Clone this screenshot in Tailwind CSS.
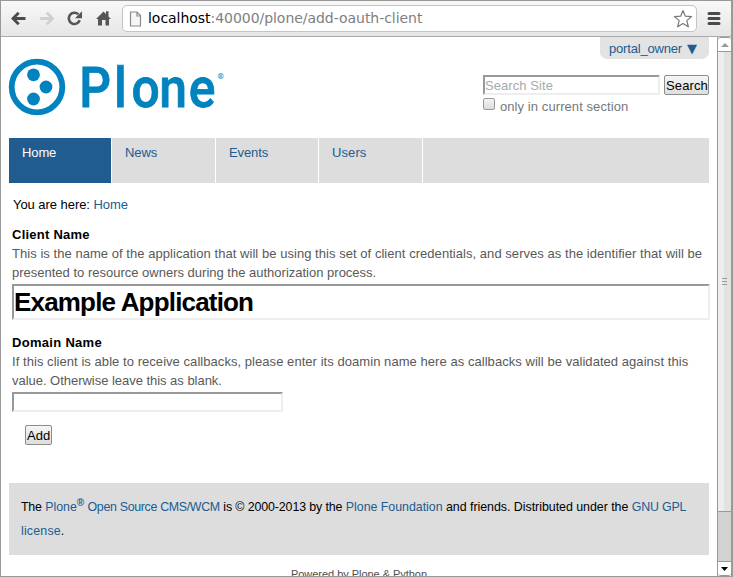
<!DOCTYPE html>
<html lang="en">
<head>
<meta charset="utf-8">
<title>Add OAuth client</title>
<script src="https://cdn.jsdelivr.net/npm/@tailwindcss/browser@4"></script>
</head>
<body class="w-[733px] h-[577px] overflow-hidden bg-white">
<div class="flex h-[577px] w-[733px] flex-col overflow-hidden border border-r-2 border-[#999] bg-white font-['Liberation_Sans',sans-serif] text-[13px] leading-[19px] whitespace-nowrap text-black">
  <header class="flex h-9 shrink-0 items-start border-b border-[#aaa] bg-linear-to-b from-[#f8f8f8] to-[#e6e6e6]">
    <svg class="h-[35px] w-[121px] shrink-0" viewBox="1 1 121 35" fill="none">
      <path d="M25.500 18.500H14M18.700 12.800l-5.700 5.700 5.700 5.700" stroke="#4b4b4b" stroke-width="2.800"/>
      <path d="M40 18.500h11.500M46.800 12.800l5.700 5.700-5.700 5.700" stroke="#d0d0d0" stroke-width="2.800"/>
      <path d="M78.300 14.300A5.600 5.600 0 1 0 79.700 20.300" stroke="#555" stroke-width="2.600"/>
      <path d="M82 11.200v7h-7z" fill="#555"/>
      <path d="M96 19l7.500-7.500 2.500 2.500v-2.800h2.500v5.300L111 19h-2v6.500h-3.500v-5.500h-3.500v5.500h-4v-6.500z" fill="#555"/>
    </svg>
    <div class="mt-1 flex h-[27px] w-[575px] items-start rounded-[5px] border border-[#c4c4c4] bg-white">
      <svg class="ml-[6px] mt-[5px] h-4 w-[13px] shrink-0" viewBox="0 0 13 16" fill="none" stroke="#8b8b8b" stroke-width="1.200"><path d="M1.500 1h6.500l3.500 3.500V15h-10zM8 1v4h3.500" fill="#f6f6f6"/></svg>
      <div class="ml-[6px] mt-[3px] font-['DejaVu_Sans',sans-serif] text-[14px] leading-[18px] tracking-[-0.04px] text-[#808080]"><span class="text-black">localhost</span>:40000/plone/add-oauth-client</div>
      <svg class="ml-auto mr-[3px] mt-[3px] h-5 w-5 shrink-0" viewBox="0 0 20 20" fill="#fff" stroke="#777" stroke-width="1.200" stroke-linejoin="round"><path d="M10 1.500l2.300 5.700 6.200.4-4.700 4 1.600 6.200L10 14.500l-5.400 3.300 1.600-6.200-4.700-4 6.200-.4z"/></svg>
    </div>
    <svg class="ml-[10px] mt-[10px] h-[15px] w-[14px]" viewBox="0 0 14 15" stroke="#4a4a4a" stroke-width="3" stroke-linecap="round"><path d="M2 2.500h10M2 7.500h10M2 12.500h10"/></svg>
  </header>
  <div class="flex min-h-0 flex-1">
    <main class="h-[539px] w-[716px] shrink-0 overflow-hidden pl-2">
      <section class="flex h-[101px] w-[700px] justify-between">
        <svg class="mt-[20px] h-[62px] w-[220px] overflow-visible" viewBox="9 57 220 62">
          <circle cx="37" cy="87" r="25.300" fill="none" stroke="#0083be" stroke-width="5.800"/>
          <g fill="#0083be"><circle cx="33.500" cy="74.800" r="6.400"/><circle cx="46" cy="87" r="6.400"/><circle cx="33.500" cy="99" r="6.400"/></g>
          <text transform="scale(.89 1)" x="89 128 147.800 178.800 212" y="107" font-family="Roboto" font-weight="500" font-size="56" fill="#0083be" stroke="#0083be" stroke-width=".8">Plone</text>
          <text x="217.500" y="79" font-family="Roboto" font-weight="700" font-size="8" fill="#0083be">®</text>
        </svg>
        <div class="flex w-[227px] flex-col">
          <div class="flex h-[22px] w-[109px] self-end rounded-b-[7px] bg-[#e3e3e3] pl-[9px] pt-[2px] text-[#205c90]"><span class="tracking-[-0.18px]">portal_owner</span><span class="ml-[5px] font-['DejaVu_Sans',sans-serif] text-[13px]">▼</span></div>
          <div class="mt-4 flex h-5 items-start justify-between pl-px">
            <div class="h-5 w-[177px] border-2 border-[#eee] border-t-[#999] border-l-[#999] leading-[18px] text-[#a9a9a9]"><span class="tracking-[0.07px]">Search Site</span></div>
            <button class="h-5 w-[45px] rounded-[2px] border border-[#8c8c8c] bg-linear-to-b from-[#f6f6f6] to-[#dedede] pl-px text-left leading-5"><span class="tracking-[0.13px]">Search</span></button>
          </div>
          <label class="flex items-start pl-px pt-[2px] text-[#76797c]"><span class="mt-px size-3 rounded-[2px] border border-[#999] bg-linear-to-b from-[#f4f4f4] to-[#dcdcdc]"></span><span class="ml-[5px] tracking-[0.08px]">only in current section</span></label>
        </div>
      </section>
      <nav class="flex h-[45px] w-[700px] bg-[#ddd] tracking-[-0.12px] text-[#205c90]">
        <a class="w-[103px] border-r border-white bg-[#205c90] pl-[13px] pt-[5px] text-white">Home</a>
        <a class="w-[104px] border-r border-white pl-[13px] pt-[5px]">News</a>
        <a class="w-[103px] border-r border-white pl-[13px] pt-[5px]">Events</a>
        <a class="w-[104px] border-r border-white pl-[13px] pt-[5px] tracking-[0.1px]">Users</a>
      </nav>
      <div class="mt-3 h-[30px] pl-1 tracking-[-0.05px]">You are here: <a class="text-[#205c90]">Home</a></div>
      <form class="w-[701px] pl-[3px]">
        <div class="font-bold tracking-[0.24px]">Client Name</div>
        <p class="text-[#595959]"><span class="tracking-[0.045px]">This is the name of the application that will be using this set of client credentials, and serves as the identifier that will be</span><br>presented to resource owners during the authorization process.</p>
        <div class="mt-[2px] h-9 border-2 border-[#eee] border-t-[#999] border-l-[#999] text-[26px] leading-8 font-bold tracking-[-0.82px]">Example Application</div>
        <div class="mt-[13px] font-bold tracking-[0.3px]">Domain Name</div>
        <p class="text-[#595959]"><span class="tracking-[0.052px]">If this client is able to receive callbacks, please enter its doamin name here as callbacks will be validated against this</span><br><span class="tracking-[-0.03px]">value. Otherwise leave this as blank.</span></p>
        <div class="mt-[2px] h-5 w-[271px] border-2 border-[#eee] border-t-[#999] border-l-[#999]"></div>
        <button type="button" class="mt-[13px] ml-[13px] block h-5 w-[27px] rounded-[2px] border border-[#8c8c8c] bg-linear-to-b from-[#f6f6f6] to-[#dedede] pl-px text-left leading-5">Add</button>
      </form>
      <footer class="mt-[38px] h-[72px] w-[700px] bg-[#ddd] pl-3 pt-3 text-[12.4px] leading-6 tracking-[-0.025px]">
        <span class="tracking-[-0.2px]">The</span> <a class="text-[#205c90]">Plone<sup class="text-[10px] font-bold">®</sup> <span class="tracking-[-0.32px]">Open Source CMS/WCM</span></a> <span class="tracking-[-0.11px]">is © 2000-2013 by the</span> <a class="text-[#205c90]">Plone Foundation</a> and friends. Distributed under the <a class="text-[#205c90]"><span class="tracking-[-0.18px]">GNU GPL</span><br><span class="tracking-[0.18px]">license</span></a>.
      </footer>
      <div class="mt-[10px] w-[700px] text-center text-[11px] tracking-[-0.04px] text-[#4d4d4d]">Powered by Plone &amp; Python</div>
    </main>
    <aside class="flex w-[14px] flex-col border-l border-[#999]">
      <div class="flex h-[15px] shrink-0 items-center justify-center rounded-t-[3px] border-y border-[#999] bg-white"><svg class="h-1 w-2" viewBox="0 0 8 4" fill="#999"><path d="M4 0l4 4H0z"/></svg></div>
      <div class="flex h-[460px] shrink-0 flex-col items-center justify-center gap-[2px] border-b border-[#999] bg-linear-to-r from-[#eee] from-50% to-[#e2e2e2] to-50%">
        <div class="h-px w-[5px] bg-[#999]"></div><div class="h-px w-[5px] bg-[#999]"></div><div class="h-px w-[5px] bg-[#999]"></div>
      </div>
      <div class="h-[49px] shrink-0 bg-[#d2d2d2]"></div>
      <div class="flex flex-1 items-center justify-center rounded-b-[3px] border-y border-[#999] bg-white"><svg class="h-1 w-[7px]" viewBox="0 0 7 4"><path d="M0 0h7L3.500 4z"/></svg></div>
    </aside>
  </div>
</div>
</body>
</html>
